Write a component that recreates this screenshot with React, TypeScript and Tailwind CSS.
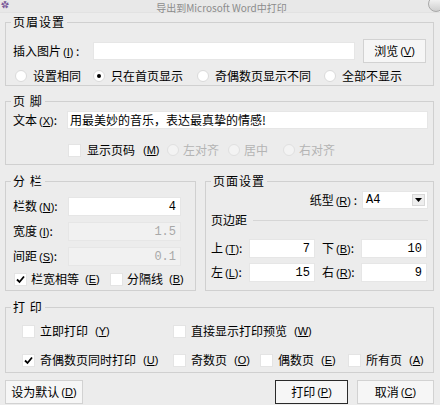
import type { ReactNode } from "react";

const ui = "font-['Noto_Sans_CJK_SC',sans-serif] text-[12px] leading-[14px]";
const mono = "font-['Liberation_Mono',monospace] text-[12px]";

function Key({ k }: { k: string }) {
  return (
    <span className="ml-[2px] font-['Liberation_Sans',sans-serif] text-[11px]">
      (<span className="underline underline-offset-[1px]">{k}</span>)
    </span>
  );
}

function Group({
  label,
  className,
  children,
}: {
  label: string;
  className?: string;
  children: ReactNode;
}) {
  return (
    <div className={`relative border border-[#d0d0d0] ${className ?? ""}`}>
      <span className="absolute -top-[8px] left-[5px] bg-[#ececec] px-[2px] tracking-[1px]">
        {label}
      </span>
      {children}
    </div>
  );
}

function Check({ checked = false }: { checked?: boolean }) {
  return (
    <span className="flex size-[13px] shrink-0 items-center justify-center border border-[#e4e4e4] bg-white">
      {checked && (
        <svg viewBox="0 0 9 9" className="size-[9px]">
          <path d="M1 4.5 L3.5 7 L8 1.5" fill="none" stroke="#000" strokeWidth="1.8" />
        </svg>
      )}
    </span>
  );
}

function Radio({ on = false, disabled = false }: { on?: boolean; disabled?: boolean }) {
  return (
    <span
      className={`flex size-[12px] shrink-0 items-center justify-center rounded-full border ${
        disabled ? "border-[#e0e0e0] bg-[#f3f3f3]" : "border-[#dadada] bg-white"
      }`}
    >
      {on && <span className="size-[4px] rounded-full bg-black" />}
    </span>
  );
}

function Field({
  value,
  disabled = false,
  className,
}: {
  value?: string;
  disabled?: boolean;
  className?: string;
}) {
  return (
    <div
      className={`flex h-[19px] items-center justify-end border border-[#e6e6e6] pr-[4px] ${mono} ${
        disabled ? "bg-[#f1f1f1] text-[#a8a8a8]" : "bg-white text-black"
      } ${className ?? ""}`}
    >
      {value}
    </div>
  );
}

function Btn({
  children,
  className,
  primary = false,
}: {
  children: ReactNode;
  className?: string;
  primary?: boolean;
}) {
  return (
    <button
      className={`flex h-[24px] items-center justify-center bg-[#f6f6f6] ${
        primary ? "border border-[#2a2a2a]" : "border border-[#d2d2d2]"
      } ${className ?? ""}`}
    >
      {children}
    </button>
  );
}

export default function App() {
  return (
    <div className={`relative h-[405px] w-[440px] overflow-hidden bg-[#ececec] text-black ${ui}`}>
      {/* title bar */}
      <div className="relative flex h-[13px] items-start justify-center border-b border-[#e2e2e2] bg-[#e8e8e8]">
        <span className="mt-[2px] pl-[3px] text-[10px] leading-[11px] text-[#8c8c8c]">导出到Microsoft Word中打印</span>
        <span className="absolute left-[1px] top-0 text-[8px] leading-[9px] text-[#7a5a9a]">✿</span>
        <span className="absolute -top-[4px] left-[428px] size-[16px] rounded-full border border-[#a8a8a8] bg-gradient-to-b from-[#fafafa] to-[#cfcfcf]" />
      </div>

      <div className="flex flex-col pl-[5px]">
        {/* 页眉设置 */}
        <Group label="页眉设置" className="mt-[9px] h-[64px] w-[429px]">
          <div className="flex items-center pl-[7px] pr-[7px] pt-[16px]">
            <span className="w-[80px]">
              插入图片<Key k="I" /> :
            </span>
            <div className="h-[18px] w-[262px] border border-[#e6e6e6] bg-white" />
            <Btn className="ml-[8px] h-[19px] w-[63px]">
              浏览<Key k="V" />
            </Btn>
          </div>
          <div className="mt-[5px] flex h-[16px] items-center pl-[9px]">
            <span className="flex w-[78px] items-center gap-[6px]">
              <Radio />
              设置相同
            </span>
            <span className="flex w-[104px] items-center gap-[6px]">
              <Radio on />
              只在首页显示
            </span>
            <span className="flex w-[127px] items-center gap-[6px]">
              <Radio />
              奇偶数页显示不同
            </span>
            <span className="flex items-center gap-[6px]">
              <Radio />
              全部不显示
            </span>
          </div>
        </Group>

        {/* 页脚 */}
        <Group label="页 脚" className="mt-[15px] h-[64px] w-[429px]">
          <div className="flex items-center pl-[7px] pr-[5px] pt-[9px]">
            <span className="w-[54px]">
              文本<Key k="X" />:
            </span>
            <div className="flex h-[18px] flex-1 items-center border border-[#e6e6e6] bg-white pl-[2px]">
              用最美妙的音乐，表达最真挚的情感!
            </div>
          </div>
          <div className="mt-[14px] flex h-[14px] items-center pl-[62px]">
            <span className="flex w-[99px] items-center gap-[6px]">
              <Check />
              显示页码<Key k="M" />
            </span>
            <span className="flex w-[61px] items-center gap-[4px] text-[#b4b4b4]">
              <Radio disabled />
              左对齐
            </span>
            <span className="flex w-[55px] items-center gap-[4px] text-[#b4b4b4]">
              <Radio disabled />
              居中
            </span>
            <span className="flex items-center gap-[4px] text-[#b4b4b4]">
              <Radio disabled />
              右对齐
            </span>
          </div>
        </Group>

        <div className="mt-[16px] flex gap-[9px]">
          {/* 分栏 */}
          <Group label="分 栏" className="h-[110px] w-[191px]">
            <div className="flex flex-col gap-[6px] pl-[7px] pt-[15px]">
              <div className="flex items-center">
                <span className="w-[55px]">
                  栏数<Key k="N" />:
                </span>
                <Field value="4" className="w-[113px]" />
              </div>
              <div className="flex items-center">
                <span className="w-[55px]">
                  宽度<Key k="I" />:
                </span>
                <Field value="1.5" disabled className="w-[113px]" />
              </div>
              <div className="flex items-center">
                <span className="w-[55px]">
                  间距<Key k="S" />:
                </span>
                <Field value="0.1" disabled className="w-[113px]" />
              </div>
            </div>
            <div className="mt-[6px] flex h-[14px] items-center pl-[8px]">
              <span className="flex w-[96px] items-center gap-[4px]">
                <Check checked />
                栏宽相等<Key k="E" />
              </span>
              <span className="flex items-center gap-[4px]">
                <Check />
                分隔线<Key k="B" />
              </span>
            </div>
          </Group>

          {/* 页面设置 */}
          <Group label="页面设置" className="h-[110px] w-[229px]">
            <div className="flex items-center justify-end gap-[5px] pr-[5px] pt-[9px]">
              <span>
                纸型<Key k="R" /> :
              </span>
              <div className="flex h-[18px] w-[66px] items-center justify-between border border-[#e6e6e6] bg-white pl-[3px] pr-[2px]">
                <span className={`${mono} text-[11px]`}>A4</span>
                <span className="flex h-[12px] w-[13px] items-center justify-center border border-[#d8d8d8] bg-[#eeeeee]">
                  <svg viewBox="0 0 7 4" className="h-[4px] w-[7px]">
                    <path d="M0 0 H7 L3.5 4 Z" fill="#000" />
                  </svg>
                </span>
              </div>
            </div>
            <div className="mt-[4px] flex h-[14px] items-center pl-[5px] pr-[5px]">
              <span>页边距</span>
              <span className="ml-[6px] h-px flex-1 bg-[#d6d6d6]" />
            </div>
            <div className="mt-[12px] flex flex-col gap-[5px] pl-[5px]">
              <div className="flex items-center">
                <span className="w-[38px]">
                  上<Key k="T" />:
                </span>
                <Field value="7" className="w-[66px]" />
                <span className="ml-[7px] w-[39px]">
                  下<Key k="B" />:
                </span>
                <Field value="10" className="w-[66px]" />
              </div>
              <div className="flex items-center">
                <span className="w-[38px]">
                  左<Key k="L" />:
                </span>
                <Field value="15" className="w-[66px]" />
                <span className="ml-[7px] w-[39px]">
                  右<Key k="R" />:
                </span>
                <Field value="9" className="w-[66px]" />
              </div>
            </div>
          </Group>
        </div>

        {/* 打印 */}
        <Group label="打 印" className="mt-[16px] h-[66px] w-[429px]">
          <div className="mt-[16px] flex h-[14px] items-center pl-[16px]">
            <span className="flex w-[151px] items-center gap-[5px]">
              <Check />
              立即打印<Key k="Y" />
            </span>
            <span className="flex items-center gap-[5px]">
              <Check />
              直接显示打印预览<Key k="W" />
            </span>
          </div>
          <div className="mt-[15px] flex h-[14px] items-center pl-[16px]">
            <span className="flex w-[151px] items-center gap-[5px]">
              <Check checked />
              奇偶数页同时打印<Key k="U" />
            </span>
            <span className="flex w-[87px] items-center gap-[5px]">
              <Check />
              奇数页<Key k="O" />
            </span>
            <span className="flex w-[88px] items-center gap-[5px]">
              <Check />
              偶数页<Key k="E" />
            </span>
            <span className="flex items-center gap-[5px]">
              <Check />
              所有页<Key k="A" />
            </span>
          </div>
        </Group>

        {/* buttons */}
        <div className="mt-[7px] flex w-[429px] justify-between">
          <Btn className="w-[78px]">
            设为默认<Key k="D" />
          </Btn>
          <div className="flex gap-[9px]">
            <Btn primary className="w-[73px]">
              打印<Key k="P" />
            </Btn>
            <Btn className="w-[77px]">
              取消<Key k="C" />
            </Btn>
          </div>
        </div>
      </div>
    </div>
  );
}
